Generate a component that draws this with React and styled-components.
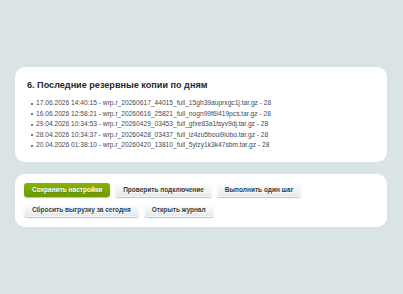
import React from "react"
import styled, { createGlobalStyle } from "styled-components"

const GlobalStyle = createGlobalStyle`
  html, body {
    margin: 0;
    padding: 0;
    background: #dae3e6;
    font-family: "Liberation Sans", Arial, sans-serif;
  }
`

const Page = styled.div`
  width: 403px;
  height: 294px;
  box-sizing: border-box;
  padding: 67px 16px 0 15px;
  display: flex;
  flex-direction: column;
  gap: 12px;
`

const Card = styled.div`
  background: #fff;
  border-radius: 10px;
  box-sizing: border-box;
  padding: ${(p) => p.$padding};
`

const Heading = styled.h2`
  margin: 0 0 7px;
  font-size: 9.1px;
  font-weight: bold;
  color: #1d2a31;
  line-height: 12px;
`

const List = styled.ul`
  margin: 0;
  padding: 0 0 0 9px;
  list-style: none;
`

const Item = styled.li`
  position: relative;
  font-size: 6.65px;
  line-height: 10.6px;
  height: 10.6px;
  color: #3f4b52;

  &::before {
    content: "";
    position: absolute;
    left: -5px;
    top: 4.5px;
    width: 2px;
    height: 2px;
    border-radius: 50%;
    background: #3f4b52;
  }
`

const Buttons = styled.div`
  display: flex;
  flex-wrap: wrap;
  gap: 6px 5px;
  width: 290px;
`

const Button = styled.button`
  height: 14px;
  padding: 0 ${(p) => p.$pad}px;
  border-radius: 3px;
  font-family: "Liberation Sans", Arial, sans-serif;
  font-size: 6.5px;
  line-height: 14px;
  font-weight: bold;
  cursor: pointer;
  border: none;
  color: ${(p) => (p.$primary ? "#fff" : "#333c41")};
  text-shadow: ${(p) => (p.$primary ? "0 1px rgba(0,0,0,0.2)" : "0 1px #fff")};
  background: ${(p) =>
    p.$primary
      ? "linear-gradient(#8ab400, #6c9900)"
      : "linear-gradient(#ffffff, #e2e9eb)"};
  box-shadow: ${(p) =>
    p.$primary
      ? "0 1px 1px rgba(0,0,0,0.25)"
      : "0 1px 1px rgba(0,0,0,0.25), inset 0 0 0 1px rgba(255,255,255,0.6)"};
`

const backups = [
  "17.06.2026 14:40:15 - wrp.r_20260617_44015_full_15gh39auprxgc1j.tar.gz - 28",
  "16.06.2026 12:58:21 - wrp.r_20260616_25821_full_nogn99f6l419pcs.tar.gz - 28",
  "29.04.2026 10:34:53 - wrp.r_20260429_03453_full_gfxe83a1tsyv9dj.tar.gz - 28",
  "28.04.2026 10:34:37 - wrp.r_20260428_03437_full_iz4zu5boui9iobo.tar.gz - 28",
  "20.04.2026 01:38:10 - wrp.r_20260420_13810_full_5ylzy1k3k47sbm.tar.gz - 28",
]

export default function App() {
  return (
    <>
      <GlobalStyle />
      <Page>
        <Card $padding="12px 12px 11px">
          <Heading>6. Последние резервные копии по дням</Heading>
          <List>
            {backups.map((b) => (
              <Item key={b}>{b}</Item>
            ))}
          </List>
        </Card>
        <Card $padding="9px 9px 10px">
          <Buttons>
            <Button $primary $pad={8}>Сохранить настройки</Button>
            <Button $pad={8}>Проверить подключение</Button>
            <Button $pad={8}>Выполнить один шаг</Button>
            <Button $pad={8}>Сбросить выгрузку за сегодня</Button>
            <Button $pad={8}>Открыть журнал</Button>
          </Buttons>
        </Card>
      </Page>
    </>
  )
}
